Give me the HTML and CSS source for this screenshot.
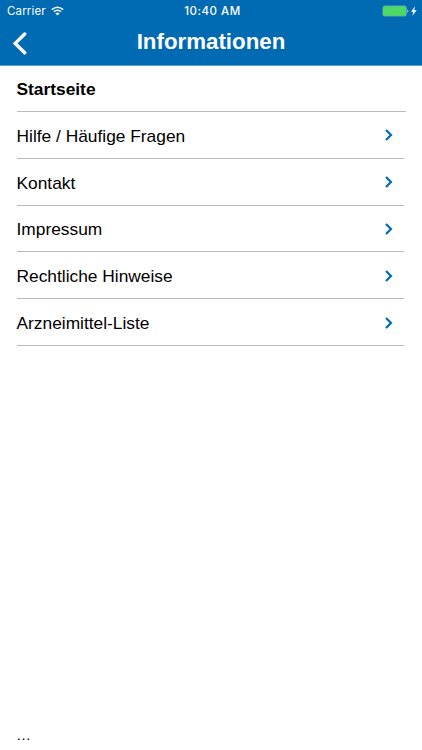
FILE: index.html
```html
<!DOCTYPE html>
<html lang="de">
<head>
<meta charset="utf-8">
<title>Informationen</title>
<link rel="stylesheet" href="styles.css">
</head>
<body>
<header class="header">
  <div class="status">
    <div class="carrier"><span>Carrier</span>
      <svg class="wifi" viewBox="0 0 13 10"><path d="M.8 3.6Q6.5-1.2 12.2 3.6M2.8 5.8Q6.5 2.8 10.2 5.8" fill="none" stroke="#fff" stroke-width="1.4"/><path d="M4.4 7.4Q6.5 5.8 8.6 7.4L6.5 9.5Z" fill="#fff"/></svg>
    </div>
    <span class="time">10:40 AM</span>
    <svg class="battery" viewBox="0 0 36 12"><rect x=".9" y=".9" width="23.4" height="10.2" rx="1.8" fill="#4cd964" stroke="#6ba8bd" stroke-width=".8"/><path d="M25.3 4.2q2.2 1.8 0 3.6z" fill="#b5d6ea"/><path d="M33 1.3L29 6.7h2.3L30.3 10.7l4.4-5.4h-2.5z" fill="#fff"/></svg>
  </div>
  <div class="navbar">
    <svg class="back" viewBox="0 0 16 24"><path d="M12.7 3L3.2 12.4l9.5 9.4" fill="none" stroke="#fff" stroke-width="3.4" stroke-linecap="round"/></svg>
    <h1 class="title">Informationen</h1>
  </div>
</header>
<main class="list">
  <div class="row home"><span>Startseite</span></div>
  <div class="row"><span>Hilfe / Häufige Fragen</span><svg class="chevron" viewBox="0 0 10 14"><path d="M2 2l5 5-5 5"/></svg></div>
  <div class="row"><span>Kontakt</span><svg class="chevron" viewBox="0 0 10 14"><path d="M2 2l5 5-5 5"/></svg></div>
  <div class="row"><span>Impressum</span><svg class="chevron" viewBox="0 0 10 14"><path d="M2 2l5 5-5 5"/></svg></div>
  <div class="row"><span>Rechtliche Hinweise</span><svg class="chevron" viewBox="0 0 10 14"><path d="M2 2l5 5-5 5"/></svg></div>
  <div class="row"><span>Arzneimittel-Liste</span><svg class="chevron" viewBox="0 0 10 14"><path d="M2 2l5 5-5 5"/></svg></div>
</main>
<footer class="footer">…</footer>
</body>
</html>
```
FILE: styles.css
```css
* { box-sizing: border-box; }
body { margin: 0; height: 750px; display: flex; flex-direction: column; background: #fff; color: #000; font-family: "Liberation Sans", Arial, sans-serif; overflow: hidden; }
.header { height: 66px; background: #006ab3; border-bottom: 1px solid #5c9fd0; color: #fff; }
.status { height: 22px; padding: 0 4px 0 7px; display: grid; grid-template-columns: 1fr auto 1fr; align-items: center; font-family: Inter, sans-serif; font-size: 11.5px; }
.carrier { display: flex; align-items: center; gap: 5px; letter-spacing: .15px; }
.wifi { width: 13px; height: 10px; }
.time { font-weight: 500; letter-spacing: .5px; }
.battery { width: 36px; height: 12px; justify-self: end; }
.navbar { height: 42px; padding: 0 12px; display: grid; grid-template-columns: 16px 1fr 16px; align-items: center; }
.back { width: 16px; height: 24px; }
.title { margin: 0; padding-bottom: 2px; font-size: 22.3px; line-height: 38px; text-align: center; }
.list { flex: 1; padding: 0 18px 0 16.5px; }
.row { height: 46.8px; padding: 2px 10px 0 0; border-bottom: 1px solid #bbb; display: flex; align-items: center; justify-content: space-between; font-size: 17.35px; }
.row span { padding-top: 1px; }
.home { height: 46px; margin-right: -2px; padding-top: 0; font-weight: bold; }
.chevron { width: 10px; height: 14px; margin-bottom: 1px; fill: none; stroke: #006ab3; stroke-width: 2.2; }
.footer { height: 26px; padding-left: 16px; font-size: 15px; line-height: 21px; }
```
